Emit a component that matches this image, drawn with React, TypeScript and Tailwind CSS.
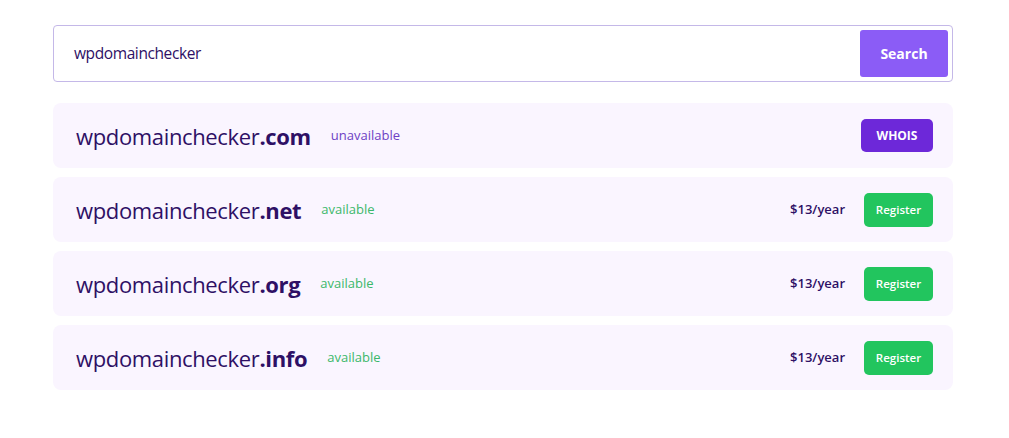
const domains = [
  { name: "wpdomainchecker", tld: ".com", available: false },
  { name: "wpdomainchecker", tld: ".net", available: true, price: "$13/year" },
  { name: "wpdomainchecker", tld: ".org", available: true, price: "$13/year" },
  { name: "wpdomainchecker", tld: ".info", available: true, price: "$13/year" },
];

const App = () => {
  return (
    <div className="w-full min-h-screen bg-white font-['Open_Sans',sans-serif] pt-[25px]">
      <div className="w-[900px] ml-[53px] flex flex-col gap-[9px]">
        <div className="h-[57px] flex items-center justify-between pl-[20px] pr-[4px] border border-[#c4b8e8] rounded-[4px] mb-[12px]">
          <span className="text-[15.5px] text-[#2e1065] tracking-[-0.4px]">
            wpdomainchecker
          </span>
          <button className="w-[88px] h-[47px] rounded-[3px] bg-[#8b5cf6] text-white text-[14px] font-bold">
            Search
          </button>
        </div>
        {domains.map((d, i) => (
          <div
            key={i}
            className="h-[65px] flex items-center justify-between pl-[23px] pr-[20px] rounded-[8px] bg-[#faf5ff]"
          >
            <div className="flex items-center gap-[20px]">
              <h3 className="text-[22px] font-medium text-[#2e1065] tracking-[-0.35px] pt-[2px]">
                {d.name}
                <span className="font-bold">{d.tld}</span>
              </h3>
              <span
                className={
                  d.available
                    ? "text-[13px] text-[#3cb86a]"
                    : "text-[13px] text-[#6d3fc4]"
                }
              >
                {d.available ? "available" : "unavailable"}
              </span>
            </div>
            {d.available ? (
              <div className="flex items-center gap-[19px]">
                <span className="text-[13px] font-semibold text-[#2e1065]">
                  {d.price}
                </span>
                <button className="w-[69px] h-[34px] rounded-[5px] bg-[#22c55e] text-white text-[11.5px] font-semibold">
                  Register
                </button>
              </div>
            ) : (
              <button className="w-[72px] h-[33px] rounded-[5px] bg-[#6d28d9] text-white text-[12px] font-bold">
                WHOIS
              </button>
            )}
          </div>
        ))}
      </div>
    </div>
  );
};

export default App;
